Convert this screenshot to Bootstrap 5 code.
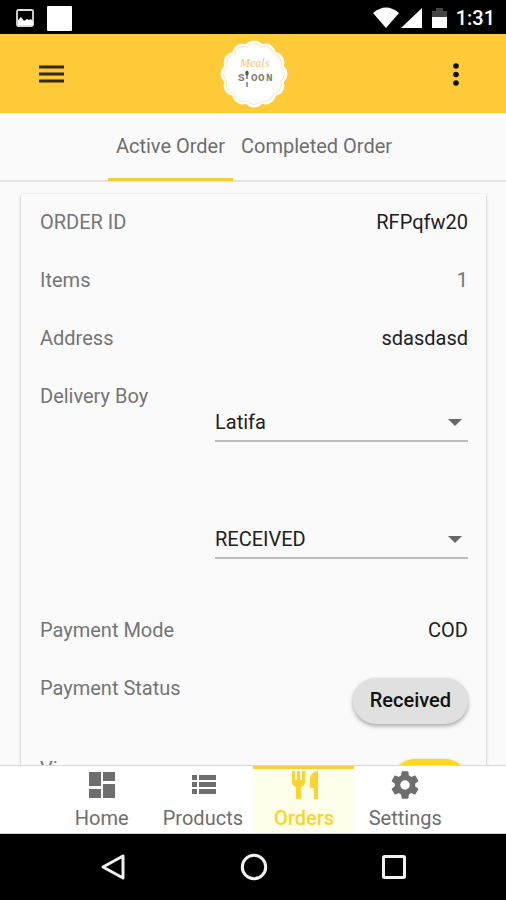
<!DOCTYPE html>
<html lang="en">
<head>
<meta charset="utf-8">
<meta name="viewport" content="width=device-width, initial-scale=1">
<title>Orders</title>
<link href="https://cdn.jsdelivr.net/npm/bootstrap@5.3.0/dist/css/bootstrap.min.css" rel="stylesheet">
<style>
  body { font-family: Roboto, "Noto Sans", sans-serif; font-size: 20px; line-height: 24px; background: #fafafa; color: #212121; }
  svg { display: block; }
  .status-bar { height: 34px; padding: 2px 11px 0 16px; gap: 13px; }
  .status-bar .clock { font-size: 20px; font-weight: 500; margin-left: -5px; }
  .app-bar { background: #ffca38; height: 79px; padding: 0 35px 0 36px; }
  .icon-button { border: 0; padding: 0; background: none; color: #000; width: 30px; }
  .order-tabs { height: 69px; border-bottom: 2px solid #e4e4e4; padding-left: 2px; }
  .order-tabs a { color: #6e6e6e; padding: 21px 8px 0; height: 68px; border-bottom: 3px solid transparent; }
  .order-tabs a.active { border-color: #f0d03a; }
  .order-card { margin: 12px 20px 0 21px; padding: 16px 18px 16px 19px; border: 0; border-radius: 2px; background: #fafafa; box-shadow: 0 1px 3px rgba(0,0,0,.3); color: #212121; }
  .order-row { min-height: 58px; }
  .status-row { min-height: 81px; }
  .order-card .term { color: #757575; font-weight: 400; }
  .picker-row { min-height: 117px; }
  .picker { width: 253px; margin-top: 22px; height: 36px; padding: 0 30px 2px 0; border: 0; border-bottom: 2px solid #bdbdbd; border-radius: 0; font-size: 20px; line-height: 24px; color: #212121; background-color: transparent;
    background-image: url("data:image/svg+xml,%3Csvg xmlns='http://www.w3.org/2000/svg' viewBox='0 0 14 8'%3E%3Cpath fill='%23666' d='M0 0h14L7 7z'/%3E%3C/svg%3E"); background-size: 14px 8px; background-position: right 6px center; }
  .chip { border: 0; background: #e0e0e0; color: #111; font-size: 20px; line-height: 24px; height: 46px; font-weight: 500; margin-top: 2px; padding: 0 17px 2px; border-radius: 23px; box-shadow: 0 2px 4px rgba(0,0,0,.35); }
  .chip-yellow { background: #fdd81b; width: 76px; }
  .bottom-tabs { height: 69px; border-top: 1px solid #d8d8d8; border-bottom: 1px solid #ccc; }
  .bottom-tabs .tab-set { width: 80%; }
  .bottom-tabs a { color: #6e6e6e; border-top: 3px solid transparent; padding: 1px 0 0 1px; }
  .bottom-tabs a.active { color: #fcd42c; font-weight: 500; background: #fffeea; border-color: #fbcd3c; }
  .bottom-tabs svg { margin-bottom: 6px; }
  .system-bar { height: 66px; padding: 0 97px 0 98px; }
  .logo-script { font: italic 12px "Liberation Serif", serif; fill: #f6c56f; }
  .logo-word { font: 700 11px "Liberation Mono", monospace; fill: #857e6e; }
</style>
<script src="https://cdn.jsdelivr.net/npm/bootstrap@5.3.0/dist/js/bootstrap.bundle.min.js"></script>
</head>
<body>
<div class="d-flex flex-column vh-100 overflow-hidden">
  <div class="status-bar bg-black text-white d-flex align-items-center flex-shrink-0">
    <svg width="18" height="18" viewBox="0 0 18 18"><rect x="1" y="1" width="16" height="16" rx="1.5" fill="none" stroke="#ddd" stroke-width="1.8"/><path d="M2 16v-5l3-3 3 4 3-2 2 1 2-1 2 3v3z" fill="#fff"/></svg>
    <svg width="25" height="25" viewBox="0 0 25 25"><rect width="25" height="25" rx="1" fill="#fff"/></svg>
    <svg class="ms-auto" width="76" height="24" viewBox="0 0 76 24"><path d="M1 7Q14-4 27 7L14 22z" fill="#fff"/><path d="M29 22H50V2z" fill="#fff"/><path d="M60 5h4V2h7v3h4v6H60z" fill="#444"/><path d="M60 11h15v11H60z" fill="#fff"/></svg>
    <span class="clock">1:31</span>
  </div>

  <header class="app-bar d-flex align-items-center justify-content-between flex-shrink-0">
    <button class="icon-button" type="button" aria-label="Menu"><svg width="30" height="24" viewBox="0 0 30 24"><path d="M3 5h25M3 12h25M3 19h25" stroke="#33280b" stroke-width="3"/></svg></button>
    <svg width="68" height="68" viewBox="0 0 68 68" role="img" aria-label="Meals Spoon">
      <g stroke-linecap="round" fill="#fff">
        <circle cx="34" cy="34" r="23" pathLength="12" stroke="#fff" stroke-width="21" stroke-dasharray="0 1"/>
        <circle cx="34" cy="34" r="21" pathLength="12" stroke="#f9dfaf" stroke-width="19.400" stroke-dasharray="0 1"/>
        <circle cx="34" cy="34" r="20.600" pathLength="12" stroke="#fff" stroke-width="18.600" stroke-dasharray="0 1"/>
      </g>
      <text class="logo-script" x="20" y="27">Meals</text>
      <text class="logo-word" x="18" y="41">S</text><text class="logo-word" x="31" y="41">O</text><text class="logo-word" x="38" y="41">O</text><text class="logo-word" x="46" y="41">N</text>
      <ellipse cx="27" cy="33" rx="1.700" ry="2.500" fill="#555"/><path d="M27 35v4M27 42v5" stroke="#777" stroke-width="1.500"/>
    </svg>
    <button class="icon-button" type="button" aria-label="More options"><svg width="30" height="26" viewBox="0 0 30 26"><g fill="#111"><circle cx="15" cy="5" r="2.800"/><circle cx="15" cy="13.500" r="2.800"/><circle cx="15" cy="22" r="2.800"/></g></svg></button>
  </header>

  <nav class="order-tabs d-flex justify-content-center flex-shrink-0" aria-label="Order lists">
    <a class="active text-decoration-none" href="#active" aria-current="page">Active Order</a>
    <a class="text-decoration-none" href="#completed">Completed Order</a>
  </nav>

  <main class="flex-fill overflow-hidden">
    <section class="order-card card">
      <div class="order-row d-flex justify-content-between"><span class="term">ORDER ID</span><span>RFPqfw20</span></div>
      <div class="order-row d-flex justify-content-between"><span class="term">Items</span><span class="term">1</span></div>
      <div class="order-row d-flex justify-content-between"><span class="term">Address</span><span>sdasdasd</span></div>
      <div class="picker-row d-flex justify-content-between"><label class="term" for="boy">Delivery Boy</label>
        <select id="boy" class="picker form-select"><option>Latifa</option></select></div>
      <div class="picker-row d-flex justify-content-end">
        <select class="picker form-select" aria-label="Order status"><option>RECEIVED</option></select></div>
      <div class="order-row d-flex justify-content-between"><span class="term">Payment Mode</span><span>COD</span></div>
      <div class="status-row d-flex justify-content-between align-items-start"><span class="term">Payment Status</span><button class="chip" type="button">Received</button></div>
      <div class="order-row d-flex justify-content-between align-items-start"><span class="term">View</span><button class="chip chip-yellow" type="button" aria-label="View order"></button></div>
    </section>
  </main>

  <nav class="bottom-tabs bg-white d-flex justify-content-center flex-shrink-0" aria-label="Main">
    <div class="tab-set d-flex">
      <a class="col-3 d-flex flex-column align-items-center text-decoration-none" href="#home"><svg width="30" height="30" viewBox="0 0 30 30" fill="currentColor"><path d="M2 2h12v14H2zM2 19h12v9H2zM16 2h12v9H16zM16 14h12v14H16z"/></svg>Home</a>
      <a class="col-3 d-flex flex-column align-items-center text-decoration-none" href="#products"><svg width="30" height="30" viewBox="0 0 30 30" fill="currentColor"><path d="M4 5h5v5H4zM11 5h17v5H11zM4 12h5v5H4zM11 12h17v5H11zM4 19h5v5H4zM11 19h17v5H11z"/></svg>Products</a>
      <a class="active col-3 d-flex flex-column align-items-center text-decoration-none" href="#orders" aria-current="page"><svg width="30" height="30" viewBox="0 0 30 30" fill="currentColor"><path d="M3 1h3v9h2V1h3v9h2V1h3v11q0 4-4 5v12H7V17q-4-1-4-5zM29 1v28h-4V18h-4V8q1-6 8-7z"/></svg>Orders</a>
      <a class="col-3 d-flex flex-column align-items-center text-decoration-none" href="#settings"><svg width="30" height="30" viewBox="1 1 22 22" fill="currentColor"><path d="M19.430 12.980c.040-.320.070-.640.070-.980s-.030-.660-.070-.980l2.110-1.650c.190-.150.240-.420.120-.640l-2-3.460c-.120-.220-.390-.300-.610-.220l-2.490 1c-.520-.400-1.080-.730-1.690-.980l-.380-2.650C14.460 2.180 14.250 2 14 2h-4c-.250 0-.460.180-.490.420l-.380 2.650c-.610.250-1.170.590-1.690.980l-2.490-1c-.230-.090-.490 0-.610.220l-2 3.460c-.130.220-.070.490.120.640l2.110 1.650c-.040.320-.070.650-.070.980s.030.660.070.980l-2.110 1.650c-.190.150-.240.420-.120.640l2 3.460c.120.220.390.300.610.220l2.490-1c.520.400 1.080.730 1.690.980l.380 2.650c.030.240.240.420.490.420h4c.250 0 .460-.180.490-.420l.380-2.650c.610-.250 1.170-.590 1.690-.980l2.490 1c.230.090.490 0 .610-.220l2-3.460c.120-.220.070-.490-.120-.640zM12 15.500a3.500 3.500 0 1 1 0-7 3.500 3.500 0 0 1 0 7z"/></svg>Settings</a>
    </div>
  </nav>

  <div class="system-bar bg-black d-flex align-items-center justify-content-between flex-shrink-0">
    <svg width="30" height="30" viewBox="0 0 30 30" fill="none" stroke="#f2f2f2" stroke-width="3"><path d="M25 4v22L5 15z" stroke-linejoin="round"/></svg>
    <svg width="30" height="30" viewBox="0 0 30 30" fill="none" stroke="#f2f2f2" stroke-width="3"><circle cx="15" cy="15" r="11.700"/></svg>
    <svg width="30" height="30" viewBox="0 0 30 30" fill="none" stroke="#f2f2f2" stroke-width="3"><rect x="4.500" y="4.500" width="21" height="21" rx="1"/></svg>
  </div>
</div>
</body>
</html>
